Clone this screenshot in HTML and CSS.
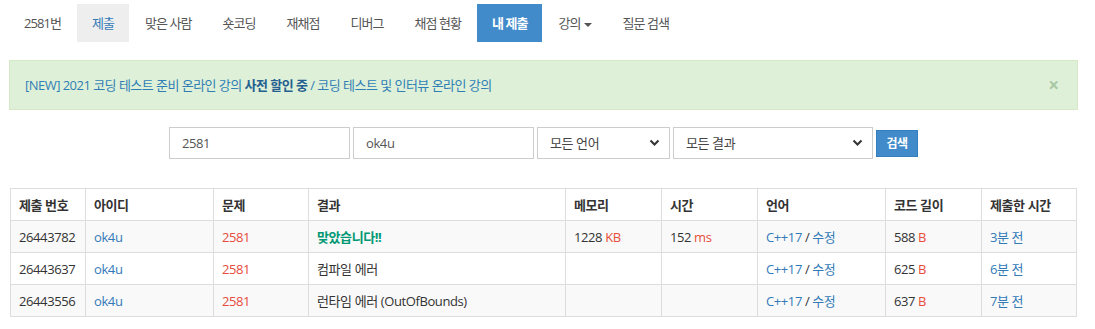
FILE: index.html
```html
<!DOCTYPE html>
<html lang="ko">
<head>
<meta charset="utf-8">
<title>내 제출</title>
<link rel="stylesheet" href="styles.css">
</head>
<body>
<div class="wrap">
  <ul class="nav">
    <li><a href="#">2581번</a></li>
    <li class="light"><a href="#" class="blue">제출</a></li>
    <li><a href="#">맞은 사람</a></li>
    <li><a href="#">숏코딩</a></li>
    <li><a href="#">재채점</a></li>
    <li><a href="#">디버그</a></li>
    <li><a href="#">채점 현황</a></li>
    <li class="active"><a href="#">내 제출</a></li>
    <li><a href="#">강의<span class="caret"></span></a></li>
    <li><a href="#">질문 검색</a></li>
  </ul>

  <div class="alert">
    <span class="alert-text">[NEW] 2021 코딩 테스트 준비 온라인 강의 <b>사전 할인 중</b> / 코딩 테스트 및 인터뷰 온라인 강의</span>
    <span class="close">×</span>
  </div>

  <form class="search">
    <div class="field w-prob">2581</div>
    <div class="field w-user">ok4u</div>
    <div class="field sel w-lang">모든 언어<svg class="chev" width="11" height="8" viewBox="0 0 11 8"><path d="M1.5 1.5 L5.5 5.5 L9.5 1.5" fill="none" stroke="#333" stroke-width="2"/></svg></div>
    <div class="field sel w-res">모든 결과<svg class="chev" width="11" height="8" viewBox="0 0 11 8"><path d="M1.5 1.5 L5.5 5.5 L9.5 1.5" fill="none" stroke="#333" stroke-width="2"/></svg></div>
    <button type="button" class="btn">검색</button>
  </form>

  <table class="status">
    <colgroup>
      <col style="width:75px"><col style="width:128px"><col style="width:95px"><col style="width:257px"><col style="width:96px"><col style="width:96px"><col style="width:128px"><col style="width:96px"><col style="width:95px">
    </colgroup>
    <thead>
      <tr><th>제출 번호</th><th>아이디</th><th>문제</th><th>결과</th><th>메모리</th><th>시간</th><th>언어</th><th>코드 길이</th><th>제출한 시간</th></tr>
    </thead>
    <tbody>
      <tr>
        <td>26443782</td><td><a class="link">ok4u</a></td><td><a class="prob">2581</a></td>
        <td><span class="ac">맞았습니다!!</span></td>
        <td>1228 <span class="red">KB</span></td><td>152 <span class="red">ms</span></td>
        <td><a class="link">C++17</a> / <a class="link">수정</a></td><td>588 <span class="red">B</span></td><td><a class="link">3분 전</a></td>
      </tr>
      <tr>
        <td>26443637</td><td><a class="link">ok4u</a></td><td><a class="prob">2581</a></td>
        <td>컴파일 에러</td><td></td><td></td>
        <td><a class="link">C++17</a> / <a class="link">수정</a></td><td>625 <span class="red">B</span></td><td><a class="link">6분 전</a></td>
      </tr>
      <tr>
        <td>26443556</td><td><a class="link">ok4u</a></td><td><a class="prob">2581</a></td>
        <td>런타임 에러 (OutOfBounds)</td><td></td><td></td>
        <td><a class="link">C++17</a> / <a class="link">수정</a></td><td>637 <span class="red">B</span></td><td><a class="link">7분 전</a></td>
      </tr>
    </tbody>
  </table>
</div>
</body>
</html>
```

FILE: styles.css
```css
* { box-sizing: border-box; }
html, body { margin: 0; padding: 0; background: #fff; }
body {
  font-family: "Open Sans", "Noto Sans CJK KR", sans-serif;
  font-size: 13px;
  color: #333;
  line-height: 18px;
}
.wrap {
  margin-left: 9px;
  width: 1069px;
  padding-top: 4px;
}
.nav {
  list-style: none;
  margin: 0;
  padding: 0;
  display: flex;
  gap: 1px;
  height: 38px;
}
.nav li a {
  display: block;
  padding: 10px 15px;
  color: #555;
  text-decoration: none;
  line-height: 18px;
  letter-spacing: -0.95px;
}
.nav li.light a { background: #eee; color: #337ab7; }
.nav li.active a { background: #428bca; color: #fff; font-weight: bold; }
.caret {
  display: inline-block;
  width: 0; height: 0;
  margin-left: 3px;
  vertical-align: middle;
  border-top: 4px solid #555;
  border-left: 4px solid transparent;
  border-right: 4px solid transparent;
}
.alert {
  margin-top: 18px;
  height: 50px;
  background: #dff0d8;
  border: 1px solid #d6e9c6;
  padding: 15px 15px;
  display: flex;
  justify-content: space-between;
  align-items: center;
}
.alert-text { color: #2f7fb5; letter-spacing: -0.53px; }
.alert-text b { color: #23608f; font-weight: bold; }
.close { color: #a8c8a6; font-size: 19px; font-weight: bold; margin-right: 3px; }
.search {
  margin-top: 17px;
  display: flex;
  justify-content: center;
  align-items: center;
  gap: 3px;
  height: 32px;
}
.field {
  height: 32px;
  border: 1px solid #ccc;
  padding: 6px 12px;
  color: #555;
  background: #fff;
  display: flex;
  align-items: center;
  letter-spacing: -0.4px;
}
.w-prob { width: 181px; }
.w-user { width: 181px; }
.w-lang { width: 133px; }
.w-res { width: 200px; }
.sel { justify-content: space-between; padding-right: 9px; color: #444; }
.chev { flex: none; }
.btn {
  height: 27px;
  width: 42px;
  border: 1px solid #357ebd;
  background: #428bca;
  color: #fff;
  font-family: inherit;
  font-size: 12px;
  font-weight: bold;
  padding: 0;
  letter-spacing: -0.5px;
}
.status {
  margin-top: 29px;
  margin-left: 1px;
  border-collapse: collapse;
  width: 1067px;
  table-layout: fixed;
}
.status th, .status td {
  border: 1px solid #ddd;
  padding: 0 8px;
  height: 32px;
  text-align: left;
  white-space: nowrap;
  letter-spacing: -0.4px;
}
.status th { font-weight: bold; color: #333; }
.status tbody tr:nth-child(odd) { background: #f9f9f9; }
.link { color: #337ab7; }
.prob { color: #e74c3c; }
.red { color: #e74c3c; }
.ac { color: #009874; font-weight: bold; }
```
